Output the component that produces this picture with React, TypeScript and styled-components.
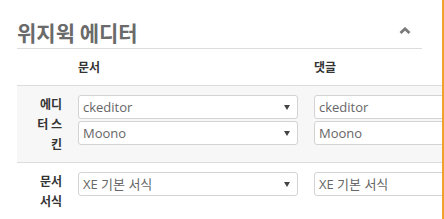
import styled, { createGlobalStyle } from 'styled-components';

const GlobalStyle = createGlobalStyle`
    html, body {
        margin: 0;
        padding: 0;
        background: #ffffff;
    }
    body {
        font-family: 'Noto Sans CJK KR', 'Noto Sans', sans-serif;
        color: #333333;
    }
`;

const Page = styled.div`
    width: 442px;
    height: 219px;
    overflow: hidden;
    border-right: 2px solid #f2a22c;
    background: #ffffff;
`;

const Header = styled.div`
    width: 394px;
    margin-left: 17px;
    padding: 17px 11px 1px 0;
    display: flex;
    align-items: center;
    justify-content: space-between;
    border-bottom: 1px solid #dddddd;
`;

const Title = styled.h2`
    margin: 0;
    font-size: 21px;
    line-height: 30px;
    font-weight: 700;
    color: #6a6a6a;
`;

const Toggle = styled.button`
    display: flex;
    padding: 0;
    margin-top: -4px;
    border: none;
    background: none;
    cursor: pointer;
`;

const Grid = styled.div`
    margin-left: 17px;
    width: 517px;
`;

const Row = styled.div<{ $shaded?: boolean; $head?: boolean }>`
    display: grid;
    grid-template-columns: 45px 220px 220px;
    column-gap: 16px;
    padding: ${(props) => (props.$head ? '0' : '8px 0')};
    border-top: ${(props) => (props.$head ? 'none' : '1px solid #dddddd')};
    background: ${(props) => (props.$shaded ? '#f7f7f7' : 'transparent')};
`;

const ColumnTitle = styled.div`
    font-size: 12px;
    line-height: 36px;
    font-weight: 700;
    color: #333333;
`;

const Label = styled.div`
    padding-left: 15px;
    font-size: 12px;
    line-height: 20px;
    font-weight: 700;
    color: #333333;
    text-align: right;
    word-break: break-all;
`;

const Stack = styled.div`
    display: flex;
    flex-direction: column;
    gap: 2px;
    margin-top: 1px;
`;

const SelectBox = styled.div`
    position: relative;

    &::after {
        content: '';
        position: absolute;
        right: 8px;
        top: 10px;
        border-left: 3px solid transparent;
        border-right: 3px solid transparent;
        border-top: 5px solid #444444;
        pointer-events: none;
    }
`;

const Select = styled.select`
    appearance: none;
    display: block;
    width: 100%;
    height: 24px;
    margin: 0;
    padding: 0 20px 0 4px;
    box-sizing: border-box;
    border: 1px solid #d3d3d3;
    border-radius: 3px;
    background: #ffffff;
    font-family: 'Open Sans', 'Noto Sans CJK KR', sans-serif;
    font-size: 13px;
    color: #666666;
    outline: none;
`;

function Caret() {
    return (
        <svg width="12" height="7" viewBox="0 0 12 7">
            <polyline points="1.5,6 6,1.8 10.5,6" fill="none" stroke="#7a7a7a" strokeWidth="2.8" />
        </svg>
    );
}

interface IPicker {
    value: string;
    options: string[];
}

function Picker({ value, options }: IPicker) {
    return (
        <SelectBox>
            <Select defaultValue={value}>
                {options.map((option) => (
                    <option key={option} value={option}>
                        {option}
                    </option>
                ))}
            </Select>
        </SelectBox>
    );
}

const editors = ['ckeditor', 'textarea'];
const skins = ['Moono', 'Moono-lisa'];
const styles = ['XE 기본 서식', '사용 안 함'];

function App() {
    return (
        <>
            <GlobalStyle />
            <Page>
                <Header>
                    <Title>위지윅 에디터</Title>
                    <Toggle type="button" aria-label="접기">
                        <Caret />
                    </Toggle>
                </Header>
                <Grid>
                    <Row $head>
                        <div />
                        <ColumnTitle>문서</ColumnTitle>
                        <ColumnTitle>댓글</ColumnTitle>
                    </Row>
                    <Row $shaded>
                        <Label>에디터 스킨</Label>
                        <Stack>
                            <Picker value="ckeditor" options={editors} />
                            <Picker value="Moono" options={skins} />
                        </Stack>
                        <Stack>
                            <Picker value="ckeditor" options={editors} />
                            <Picker value="Moono" options={skins} />
                        </Stack>
                    </Row>
                    <Row>
                        <Label>문서 서식</Label>
                        <Stack>
                            <Picker value="XE 기본 서식" options={styles} />
                        </Stack>
                        <Stack>
                            <Picker value="XE 기본 서식" options={styles} />
                        </Stack>
                    </Row>
                </Grid>
            </Page>
        </>
    );
}

export default App;
